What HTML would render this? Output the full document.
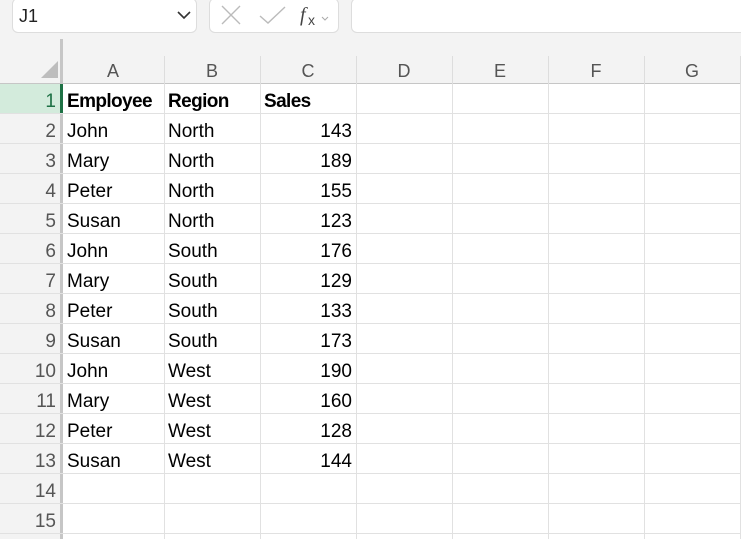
<!DOCTYPE html>
<html><head><style>
body{margin:0;width:741px;height:539px;overflow:hidden;background:#fff;font-family:"Liberation Sans",sans-serif;position:relative}
.abs{position:absolute}
.cell{position:absolute;font-size:19px;color:#000;line-height:30px;padding-top:3px}
.rh{position:absolute;left:0;width:56px;text-align:right;font-size:19px;color:#555;line-height:30px;padding-top:3px}
.ch{position:absolute;top:56px;height:28px;line-height:28px;text-align:center;font-size:18px;color:#555;padding-top:1px}
</style></head><body>
<div class="abs" style="left:0;top:0;width:741px;height:84px;background:#f3f3f3"></div>
<div class="abs" style="left:12px;top:-2px;width:183px;height:33px;border:1px solid #ddd;border-radius:6px;background:#fff"></div>
<div class="abs" style="left:19px;top:6px;font-size:18px;color:#222">J1</div>
<svg class="abs" style="left:176px;top:10px" width="16" height="10"><path d="M2 2 L8 8 L14 2" stroke="#333" stroke-width="1.6" fill="none"/></svg>
<div class="abs" style="left:209px;top:-2px;width:128px;height:33px;border:1px solid #ddd;border-radius:6px;background:#fff"></div>
<svg class="abs" style="left:220px;top:5px" width="110" height="22"><path d="M2 1 L20 19 M20 1 L2 19" stroke="#bbb" stroke-width="1.4"/><path d="M40 11 L48 18 L65 2" stroke="#bbb" stroke-width="1.4" fill="none"/><text x="80" y="16" font-family="Liberation Serif" font-style="italic" font-size="20" fill="#444">f</text><text x="88" y="20" font-family="Liberation Sans" font-size="14" fill="#444">x</text><path d="M102 12 L105 15 L108 12" stroke="#aaa" fill="none"/></svg>
<div class="abs" style="left:351px;top:-2px;width:400px;height:33px;border:1px solid #ddd;border-radius:6px;background:#fff"></div>
<div class="abs" style="left:0;top:84px;width:62px;height:455px;background:#f3f3f3"></div>
<div class="abs" style="left:0;top:84px;width:62px;height:30px;background:#d3ebdc"></div>
<div class="abs" style="left:60px;top:39px;width:3px;height:500px;background:#c6c6c6"></div>
<div class="abs" style="left:60px;top:84px;width:3px;height:30px;background:#1e7145"></div>
<svg class="abs" style="left:40px;top:60px" width="20" height="20"><path d="M18 1 L18 18 L1 18 Z" fill="#bdbdbd"/></svg>
<div class="abs" style="left:0;top:83px;width:741px;height:1px;background:#c6c6c6"></div>
<div id="grid"></div>
<script>
var g=document.getElementById('grid'),h='';
var cols=[62,164,260,356,452,548,644,740],L='ABCDEFG';
for(var i=0;i<7;i++){h+='<div class="ch" style="left:'+cols[i]+'px;width:'+(cols[i+1]-cols[i])+'px">'+L[i]+'</div>';
h+='<div class="abs" style="left:'+cols[i+1]+'px;top:56px;width:1px;height:28px;background:#ddd"></div>';
h+='<div class="abs" style="left:'+cols[i+1]+'px;top:84px;width:1px;height:455px;background:#e1e1e1"></div>';}
var d=[['Employee','Region','Sales'],['John','North',143],['Mary','North',189],['Peter','North',155],['Susan','North',123],['John','South',176],['Mary','South',129],['Peter','South',133],['Susan','South',173],['John','West',190],['Mary','West',160],['Peter','West',128],['Susan','West',144]];
for(var r=0;r<15;r++){var y=84+r*30;
h+='<div class="rh" style="top:'+y+'px;'+(r==0?'color:#1e7145':'')+'">'+(r+1)+'</div>';
h+='<div class="abs" style="left:0;top:'+(y+29)+'px;width:741px;height:1px;background:#e1e1e1"></div>';
if(d[r]){var b=r==0?'font-weight:bold;letter-spacing:-0.6px;':'';
h+='<div class="cell" style="'+b+'left:67px;top:'+y+'px">'+d[r][0]+'</div>';
h+='<div class="cell" style="'+b+'left:168px;top:'+y+'px">'+d[r][1]+'</div>';
if(r==0)h+='<div class="cell" style="'+b+'left:264px;top:'+y+'px">Sales</div>';
else h+='<div class="cell" style="left:260px;width:92px;text-align:right;top:'+y+'px">'+d[r][2]+'</div>';}}
g.innerHTML=h;
</script>
</body></html>
